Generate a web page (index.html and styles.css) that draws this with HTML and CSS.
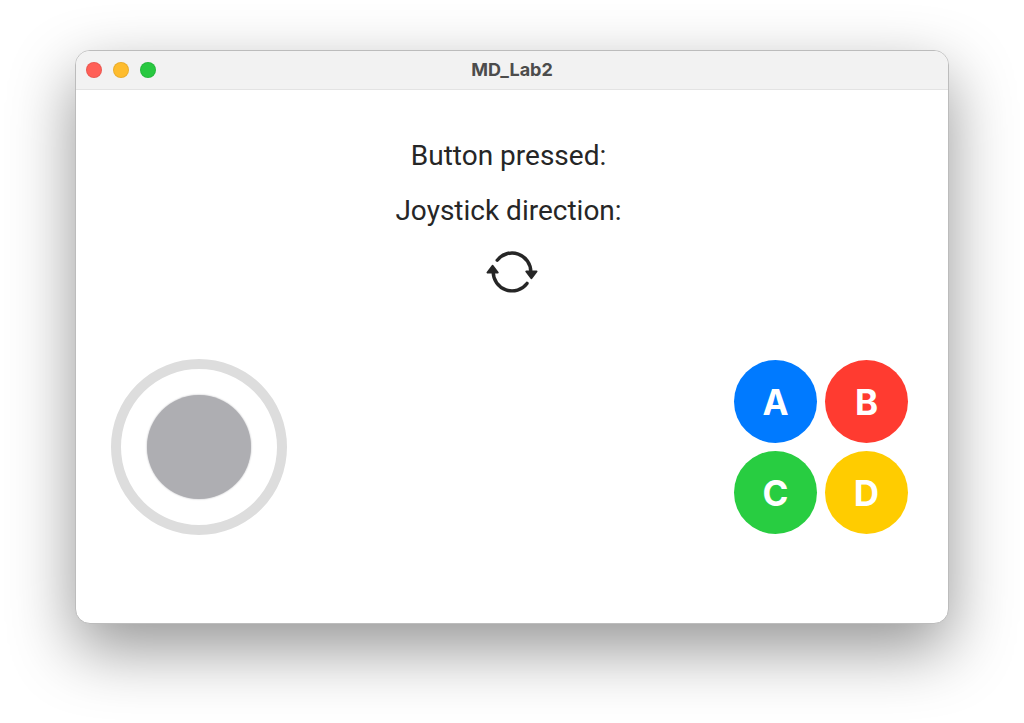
FILE: index.html
```html
<!DOCTYPE html>
<html lang="en">
<head>
    <meta charset="UTF-8">
    <meta name="viewport" content="width=device-width, initial-scale=1.0">
    <title>MD_Lab2</title>
    <link rel="stylesheet" href="styles.css">
</head>
<body>
    <div class="window">
        <header class="titlebar">
            <div class="window-buttons">
                <button type="button" class="window-btn close" aria-label="Close"></button>
                <button type="button" class="window-btn minimize" aria-label="Minimize"></button>
                <button type="button" class="window-btn zoom" aria-label="Zoom"></button>
            </div>
            <h1>MD_Lab2</h1>
        </header>

        <main class="content">
            <div class="status">
                <p>Button pressed: </p>
                <p>Joystick direction: </p>
                <svg class="direction-icon" viewBox="0 -1 52 46" aria-hidden="true">
                    <path class="arc" d="M11.2 10.2A18.8 18.8 0 0 1 44.8 22"/>
                    <path class="arc" d="M7.2 22A18.8 18.8 0 0 0 41 33.4"/>
                    <path class="head" d="M40.3 21.5H50.5L45.4 28.2Z"/>
                    <path class="head" d="M1.5 22.5H11.7L6.6 15.8Z"/>
                </svg>
            </div>

            <div class="controls">
                <div class="joystick">
                    <button type="button" class="joystick-knob" aria-label="Joystick"></button>
                </div>
                <div class="buttons">
                    <button type="button" class="pad-btn blue">A</button>
                    <button type="button" class="pad-btn red">B</button>
                    <button type="button" class="pad-btn green">C</button>
                    <button type="button" class="pad-btn yellow">D</button>
                </div>
            </div>
        </main>
    </div>
</body>
</html>
```
FILE: styles.css
```css
* {
    box-sizing: border-box;
}
body {
    font-family: Inter, "Liberation Sans", sans-serif;
    color: #262626;
    margin: 0;
    min-height: 100vh;
    padding: 50px 75px 99px;
    background-color: white;
    display: flex;
}
button {
    font-family: inherit;
    border: none;
    padding: 0;
    border-radius: 50%;
}
.window {
    flex: 1;
    display: flex;
    flex-direction: column;
    background-color: white;
    border: 1px solid #bcbcbc;
    border-radius: 15px;
    overflow: hidden;
    box-shadow: 0 25px 65px rgba(0, 0, 0, 0.42);
}
.titlebar {
    display: grid;
    grid-template-columns: 1fr auto 1fr;
    align-items: center;
    height: 39px;
    padding: 0 10px;
    background-color: #f2f2f2;
    border-bottom: 1px solid #e3e3e3;
}
.titlebar h1 {
    margin: 0;
    font-size: 18px;
    line-height: 24px;
    font-weight: 700;
    color: #4c4c4c;
}
.window-buttons {
    display: flex;
    gap: 11px;
}
.window-btn {
    width: 16px;
    height: 16px;
    border: 1px solid rgba(0, 0, 0, 0.08);
}
.window-btn.close {
    background-color: #ff5f57;
}
.window-btn.minimize {
    background-color: #febc2e;
}
.window-btn.zoom {
    background-color: #28c840;
}
.content {
    flex: 1;
    display: flex;
    flex-direction: column;
    padding: 49px 0 88px;
}
.status {
    display: flex;
    flex-direction: column;
    align-items: center;
    gap: 21px;
}
.status p {
    margin: 0;
    font-family: Roboto, "Liberation Sans", sans-serif;
    font-size: 28px;
    line-height: 34px;
    white-space: pre;
}
.direction-icon {
    width: 52px;
    height: 46px;
}
.direction-icon .arc {
    fill: none;
    stroke: #262626;
    stroke-width: 3.4;
    stroke-linecap: round;
}
.direction-icon .head {
    fill: #262626;
    stroke: #262626;
    stroke-width: 2;
    stroke-linejoin: round;
}
.controls {
    display: flex;
    justify-content: space-between;
    align-items: center;
    margin-top: auto;
    padding: 0 40px 0 35px;
}
.joystick {
    display: flex;
    justify-content: center;
    align-items: center;
    width: 176px;
    height: 176px;
    border: 10px solid #dddddd;
    border-radius: 50%;
}
.joystick-knob {
    width: 104px;
    height: 104px;
    background-color: #aeaeb2;
    box-shadow: 0 0 2px #aeaeb2;
}
.buttons {
    display: grid;
    grid-template-columns: auto auto;
    gap: 8px;
}
.pad-btn {
    width: 83px;
    height: 83px;
    color: white;
    font-size: 35px;
    font-weight: 700;
}
.pad-btn.blue {
    background-color: #007aff;
}
.pad-btn.red {
    background-color: #ff3b30;
}
.pad-btn.green {
    background-color: #28cd41;
}
.pad-btn.yellow {
    background-color: #ffcc00;
}
```
